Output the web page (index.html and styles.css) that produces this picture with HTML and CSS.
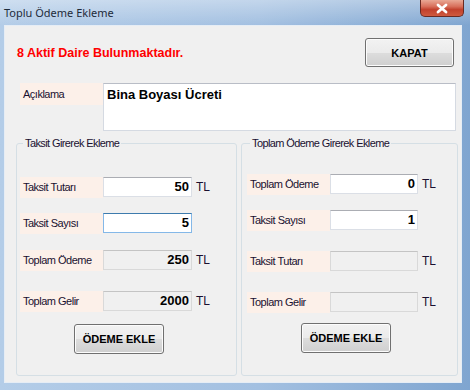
FILE: index.html
```html
<!DOCTYPE html>
<html lang="tr">
<head>
  <meta charset="UTF-8">
  <title>Toplu Ödeme Ekleme</title>
  <link rel="stylesheet" href="styles.css">
</head>
<body>

  <div class="window">
    <div class="titlebar">
      <span class="title">Toplu Ödeme Ekleme</span>
      <div class="close">
        <svg width="16" height="11" viewBox="0 0 16 11">
          <path d="M4 2 L12 9 M12 2 L4 9" stroke="#ffffff" stroke-width="2.8" stroke-linecap="round"/>
        </svg>
      </div>
    </div>

    <div class="client">
      <div class="header">
        <span class="notice">8 Aktif Daire Bulunmaktadır.</span>
        <button class="btn btn-close">KAPAT</button>
      </div>

      <div class="desc">
        <span class="lbl">Açıklama</span>
        <div class="textarea">Bina Boyası Ücreti</div>
      </div>

      <div class="groups">
        <fieldset class="group group-taksit">
          <legend>Taksit Girerek Ekleme</legend>
          <div class="row">
            <span class="lbl">Taksit Tutarı</span>
            <span class="field">50</span>
            <span class="unit">TL</span>
          </div>
          <div class="row">
            <span class="lbl">Taksit Sayısı</span>
            <span class="field focus">5</span>
          </div>
          <div class="row mid">
            <span class="lbl">Toplam Ödeme</span>
            <span class="field off">250</span>
            <span class="unit">TL</span>
          </div>
          <div class="row far">
            <span class="lbl">Toplam Gelir</span>
            <span class="field off">2000</span>
            <span class="unit">TL</span>
          </div>
          <button class="btn btn-add">ÖDEME EKLE</button>
        </fieldset>

        <fieldset class="group group-toplam">
          <legend>Toplam Ödeme Girerek Ekleme</legend>
          <div class="row">
            <span class="lbl">Toplam Ödeme</span>
            <span class="field">0</span>
            <span class="unit">TL</span>
          </div>
          <div class="row">
            <span class="lbl">Taksit Sayısı</span>
            <span class="field">1</span>
          </div>
          <div class="row far">
            <span class="lbl">Taksit Tutarı</span>
            <span class="field off"></span>
            <span class="unit">TL</span>
          </div>
          <div class="row far">
            <span class="lbl">Toplam Gelir</span>
            <span class="field off"></span>
            <span class="unit">TL</span>
          </div>
          <button class="btn btn-add">ÖDEME EKLE</button>
        </fieldset>
      </div>
    </div>
  </div>

</body>
</html>
```

FILE: styles.css
```css
body {
  margin: 0;
  font-family: 'Liberation Sans', Arial, sans-serif;
  background: #ffffff;
}
.window {
  width: 470px;
  height: 390px;
  box-sizing: border-box;
  background: linear-gradient(90deg, #b4cde8 0%, #a3c0e1 55%, #7fa5d0 100%);
  padding: 0 4px 7px 4px;
}
.titlebar {
  height: 25px;
  display: flex;
  align-items: flex-start;
  justify-content: space-between;
  background: linear-gradient(to bottom, rgba(255,255,255,0.35), rgba(255,255,255,0));
  margin: 0 -4px;
  padding: 0 6px 0 4px;
}
.title {
  font-family: 'Noto Sans', 'Liberation Sans', sans-serif;
  font-size: 11px;
  color: #1e2b3a;
  line-height: 26px;
}
.close {
  width: 44px;
  height: 17px;
  box-sizing: border-box;
  border: 1px solid #6a2a22;
  border-top: none;
  border-radius: 0 0 5px 5px;
  background: linear-gradient(to bottom, #e9a895 0%, #d8705c 40%, #c2412d 60%, #cf5a3f 100%);
  display: flex;
  align-items: center;
  justify-content: center;
}
.client {
  height: 358px;
  width: 458px;
  background: #f0f0f0;
  border: 1px solid #e6edf5;
  box-sizing: border-box;
}
.header {
  display: flex;
  align-items: center;
  justify-content: space-between;
  padding: 12px 7px 0 12px;
}
.notice {
  color: #ff0000;
  font-weight: bold;
  font-size: 12.5px;
}
.btn {
  font-family: 'Liberation Sans', Arial, sans-serif;
  font-weight: bold;
  color: #000000;
  border: 1px solid #707070;
  border-radius: 3px;
  background: linear-gradient(to bottom, #f2f2f2 0%, #ebebeb 50%, #dddddd 51%, #cfcfcf 100%);
  box-shadow: inset 0 0 0 1px #fcfcfc;
  padding: 0;
}
.btn-close {
  width: 89px;
  height: 29px;
  font-size: 11px;
}
.btn-add {
  display: block;
  width: 90px;
  height: 30px;
  font-size: 11px;
  margin: 13px 0 0 54px;
}
.desc {
  display: flex;
  margin-top: 16px;
  padding: 0 5px 0 15px;
}
.lbl {
  width: 83px;
  height: 21px;
  flex: none;
  box-sizing: border-box;
  background: #fcf0e9;
  font-size: 11px;
  letter-spacing: -0.5px;
  color: #1a1030;
  padding-left: 3px;
  line-height: 21px;
}
.desc .lbl {
  height: 22px;
  line-height: 22px;
}
.textarea {
  flex: 1;
  height: 48px;
  box-sizing: border-box;
  background: #ffffff;
  border: 1px solid #d5dae2;
  border-top-color: #b9bdc6;
  font-weight: bold;
  font-size: 13px;
  padding: 3px 0 0 3px;
  color: #000000;
}
.groups {
  display: flex;
  gap: 4px;
  margin-top: 6px;
  padding: 0 3px 0 11px;
}
.group {
  margin: 0;
  height: 239px;
  box-sizing: border-box;
  border: 1px solid #d5dfe5;
  border-radius: 3px;
  padding: 27px 0 0 3px;
  min-width: 0;
}
.group legend {
  font-size: 11px;
  letter-spacing: -0.6px;
  color: #1a1030;
  padding: 0 2px;
  margin-left: 3px;
  line-height: 13px;
}
.group-taksit {
  width: 221px;
}
.group-toplam {
  width: 217px;
  padding-top: 24px;
  padding-left: 5px;
}
.group-toplam .btn-add {
  margin-top: 11px;
}
.row {
  display: flex;
  align-items: center;
  height: 20px;
}
.row + .row {
  margin-top: 16px;
}
.row.mid {
  margin-top: 17px;
}
.row.far {
  margin-top: 21px;
}
.field {
  width: 89px;
  height: 20px;
  box-sizing: border-box;
  background: #ffffff;
  border: 1px solid #dbdfe6;
  border-top-color: #abadb3;
  font-weight: bold;
  font-size: 13px;
  text-align: right;
  padding-right: 2px;
  line-height: 18px;
  color: #000000;
}
.field.focus {
  border-color: #84b8e8;
  border-top-color: #3d7bad;
}
.field.off {
  background: #f0f0f0;
  border-color: #d9d9d9;
  border-top-color: #c4c4c4;
}
.group-toplam .field {
  width: 88px;
}
.unit {
  font-size: 12px;
  color: #1a1030;
  margin-left: 4px;
}
```
